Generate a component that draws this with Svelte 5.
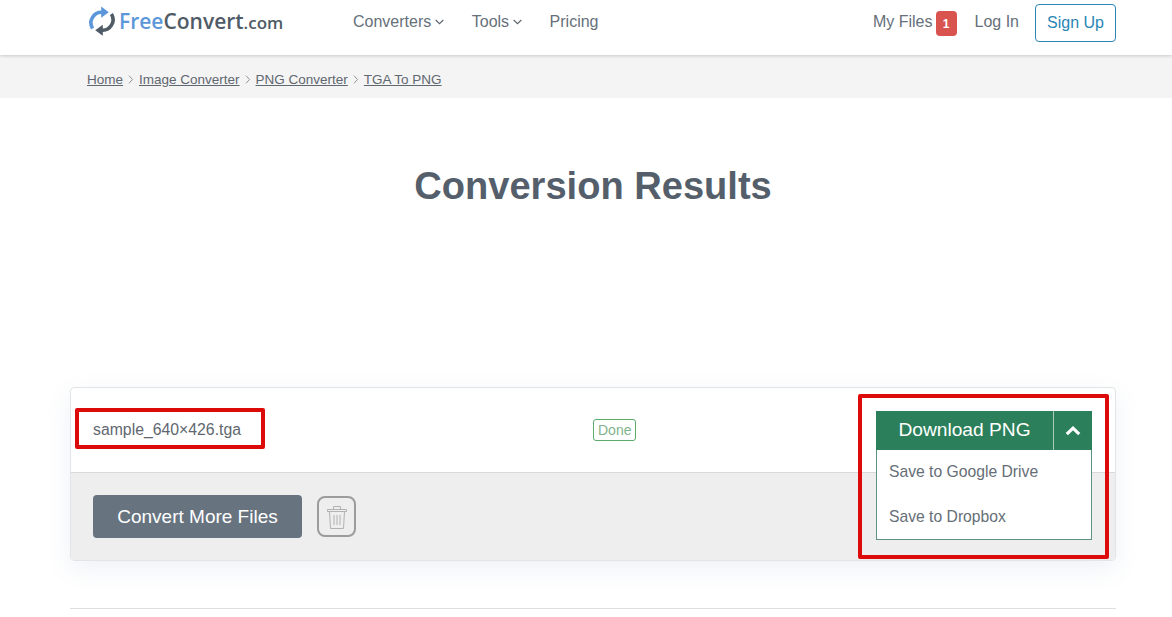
<script>
  const crumbs = ['Home', 'Image Converter', 'PNG Converter', 'TGA To PNG'];
</script>

<div class="page">
  <header class="header">
    <div class="brand">
      <svg class="logo" width="28" height="30" viewBox="0 0 28 30" fill="none" aria-hidden="true">
        <path d="M4.6 22.5 A10.6 10.6 0 0 1 14.5 6.3" stroke="#5b97d9" stroke-width="3.6"/>
        <path d="M13.2 0.6 L20.8 6.2 L13.2 11.8 Z" fill="#5b97d9"/>
        <path d="M23.4 8 A10.6 10.6 0 0 1 13.5 24.2" stroke="#4f5b66" stroke-width="3.6"/>
        <path d="M14.8 18.8 L7.2 24.3 L14.8 29.8 Z" fill="#4f5b66"/>
      </svg>
      <span class="wordmark"><span class="free">Free</span><span class="convert">Convert</span><span class="com">.com</span></span>
    </div>
    <nav class="nav">
      <span class="nav-item">Converters
        <svg width="9" height="6" viewBox="0 0 9 6" fill="none"><path d="M.7 1l3.8 3.6L8.300 1" stroke="#5f6770" stroke-width="1.200"/></svg>
      </span>
      <span class="nav-item">Tools
        <svg width="9" height="6" viewBox="0 0 9 6" fill="none"><path d="M.7 1l3.8 3.6L8.300 1" stroke="#5f6770" stroke-width="1.200"/></svg>
      </span>
      <span class="nav-item">Pricing</span>
    </nav>
    <div class="account">
      <span class="files">My Files <b class="badge">1</b></span>
      <span class="login">Log In</span>
      <span class="signup">Sign Up</span>
    </div>
  </header>

  <div class="crumbs">
    {#each crumbs as crumb, i}
      {#if i > 0}
        <svg class="sep" width="6" height="9" viewBox="0 0 6 9" fill="none"><path d="M1 .7l3.600 3.800L1 8.300" stroke="#8b9299" stroke-width="1"/></svg>
      {/if}
      <a href="#top">{crumb}</a>
    {/each}
  </div>

  <main class="main">
    <h1>Conversion Results</h1>

    <section class="card">
      <div class="row">
        <span class="filename">sample_640×426.tga</span>
        <span class="status">Done</span>
        <div class="download">
          <div class="dl-head">
            <span class="dl-label">Download PNG</span>
            <span class="dl-toggle">
              <svg width="16" height="10" viewBox="0 0 16 10" fill="none"><path d="M1.800 8.200L8 2.200l6.200 6" stroke="#fff" stroke-width="3.200"/></svg>
            </span>
          </div>
          <div class="dl-menu">
            <div class="dl-item">Save to Google Drive</div>
            <div class="dl-item">Save to Dropbox</div>
          </div>
        </div>
      </div>
      <div class="actions">
        <span class="more">Convert More Files</span>
        <span class="trash">
          <svg width="22" height="26" viewBox="0 0 22 26" fill="none" stroke="#b2b2b2" stroke-width="1">
            <path d="M1.500 5.500h19v2h-19zM7.500 5.500V2.500h7v3M3.500 7.500l1 17h13l1-17M8 11v10M11 11v10M14 11v10"/>
          </svg>
        </span>
      </div>
      <span class="mark mark-name"></span>
      <span class="mark mark-dl"></span>
    </section>

    <hr class="rule" />
  </main>
</div>

<style>
  :global(body) {
    margin: 0;
    background: #fff;
    overflow: hidden;
  }
  .page {
    height: 617px;
    overflow: hidden;
    font-family: "Liberation Sans", Arial, sans-serif;
    color: #5f6770;
  }
  .header {
    height: 55px;
    box-sizing: border-box;
    display: flex;
    align-items: center;
    padding: 0 56px 11px 88px;
    background: #fff;
    box-shadow: 0 1px 3px rgba(0, 0, 0, 0.18);
    position: relative;
  }
  .brand {
    display: flex;
    align-items: center;
    gap: 3px;
    width: 265px;
    margin-top: -2px;
  }
  .logo {
    display: block;
  }
  .wordmark {
    font-family: "Open Sans", "Noto Sans", sans-serif;
    font-size: 21px;
    font-weight: 600;
    color: #4f5b66;
    white-space: nowrap;
  }
  .free {
    color: #5b97d9;
  }
  .com {
    font-size: 17px;
  }
  .nav {
    display: flex;
    gap: 27.500px;
    font-size: 16px;
    color: #66707a;
  }
  .nav-item {
    display: flex;
    align-items: center;
    gap: 4px;
    white-space: nowrap;
  }
  .account {
    margin-left: auto;
    display: flex;
    align-items: center;
    font-size: 16px;
    color: #66707a;
    white-space: nowrap;
  }
  .files {
    display: flex;
    align-items: center;
    gap: 3px;
  }
  .badge {
    width: 21px;
    height: 25px;
    margin-top: 3px;
    border-radius: 4px;
    background: #d9534f;
    color: #fff;
    font-size: 12px;
    display: flex;
    align-items: center;
    justify-content: center;
  }
  .login {
    margin-left: 18px;
  }
  .signup {
    margin-left: 16px;
    margin-top: 2px;
    width: 81px;
    height: 38px;
    box-sizing: border-box;
    border: 1px solid #2a86b5;
    border-radius: 4px;
    color: #2a86b5;
    display: flex;
    align-items: center;
    justify-content: center;
  }
  .crumbs {
    height: 43px;
    box-sizing: border-box;
    background: #f4f4f4;
    padding: 5px 0 0 87px;
    display: flex;
    align-items: center;
    gap: 5px;
    font-size: 13.500px;
  }
  .crumbs a {
    color: #5f6770;
    text-decoration: underline;
  }
  .sep {
    display: block;
    margin: 1px 0 0;
  }
  .main {
    padding: 0 56px 0 70px;
  }
  h1 {
    margin: 65px 0 178px;
    text-align: center;
    font-size: 38.100px;
    line-height: 46px;
    font-weight: 700;
    color: #555f6b;
  }
  .card {
    position: relative;
    height: 174px;
    box-sizing: border-box;
    border: 1px solid #e2e5e8;
    border-radius: 4px;
    box-shadow: 0 8px 24px rgba(90, 120, 170, 0.1);
    display: flex;
    flex-direction: column;
  }
  .row {
    display: grid;
    grid-template-columns: 500px auto 1fr;
    grid-template-rows: 84px;
    align-items: center;
    padding: 0 23px 0 22px;
    flex: none;
    border-bottom: 1px solid #d9d9d9;
  }
  .filename {
    font-size: 15.800px;
    color: #5f6770;
  }
  .status {
    font-size: 14px;
    line-height: 20px;
    padding: 0 4px;
    border: 1px solid #5cab6d;
    border-radius: 3px;
    color: #7fb38c;
  }
  .download {
    justify-self: end;
    align-self: start;
    margin-top: 23px;
    width: 216px;
    position: relative;
    z-index: 1;
  }
  .dl-head {
    height: 39px;
    display: flex;
    background: #2b7f5a;
    color: #fff;
  }
  .dl-label {
    flex: 1;
    font-size: 19.200px;
    line-height: 37px;
    text-align: center;
  }
  .dl-toggle {
    width: 38px;
    border-left: 1px solid #a9cdbd;
    display: flex;
    align-items: center;
    justify-content: center;
  }
  .dl-menu {
    height: 90px;
    box-sizing: border-box;
    background: #fff;
    border: 1px solid #5f9580;
    border-top: 0;
    padding: 0 12px;
    font-size: 15.700px;
  }
  .dl-item {
    height: 45px;
    line-height: 44px;
    color: #666e76;
  }
  .actions {
    flex: 1;
    background: #eee;
    display: flex;
    align-items: center;
    padding: 0 22px;
    gap: 15px;
    border-radius: 0 0 4px 4px;
  }
  .more {
    width: 209px;
    height: 43px;
    border-radius: 4px;
    background: #67747f;
    color: #fff;
    font-size: 19px;
    display: flex;
    align-items: center;
    justify-content: center;
  }
  .trash {
    width: 39px;
    height: 41px;
    box-sizing: border-box;
    border: 2px solid #9c9c9c;
    border-radius: 8px;
    display: flex;
    align-items: center;
    justify-content: center;
  }
  .mark {
    position: absolute;
    box-sizing: border-box;
    border: 4px solid #dd0a0a;
    border-radius: 2px;
    z-index: 2;
  }
  .mark-name {
    left: 4px;
    top: 20px;
    width: 190px;
    height: 41px;
  }
  .mark-dl {
    left: 787px;
    top: 6px;
    width: 251px;
    height: 165px;
  }
  .rule {
    margin: 47px 0 0;
    border: 0;
    border-top: 1px solid #dfdfdf;
  }
</style>
